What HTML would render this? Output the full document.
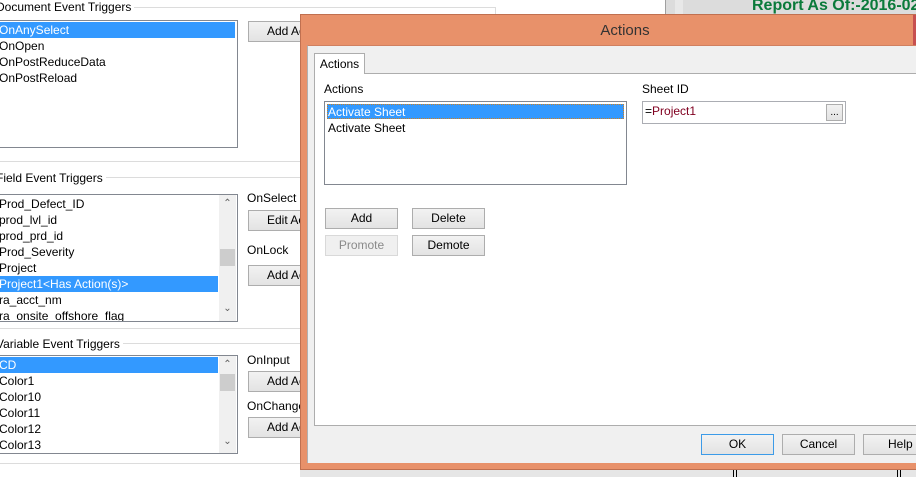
<!DOCTYPE html>
<html><head><style>
*{box-sizing:border-box;margin:0;padding:0}
body{width:916px;height:477px;overflow:hidden;background:#fff;font-family:"Liberation Sans",sans-serif;font-size:12px;color:#000;position:relative}
.a{position:absolute}
.lb{position:absolute;background:#fff;border:1px solid #828790}
.it{position:absolute;left:0;height:16px;line-height:16px;white-space:nowrap}
.sel{background:#3399ff;color:#fff}
.btn{position:absolute;background:linear-gradient(#f2f2f2,#e3e3e3);border:1px solid #adadad;text-align:center;line-height:19px;white-space:nowrap;overflow:hidden}
.grp{position:absolute;border-top:1px solid #dcdcdc}
.lab{position:absolute;background:#fff;padding-right:3px;white-space:nowrap}
.sb{position:absolute;background:#f0f0f0;width:17px}
.th{position:absolute;left:1px;width:15px;background:#cdcdcd}
.ar{position:absolute;left:0;width:17px;text-align:center;font-size:10px;color:#606060}
</style></head><body>
<div class="a" style="left:665px;top:0;width:251px;height:14px;background:#dcdcdc"></div>
<div class="a" style="left:665px;top:0;width:1px;height:14px;background:#a0a0a0"></div>
<div class="a" style="left:675px;top:0;width:8px;height:14px;background:#e8e8e8"></div>
<div class="a" style="left:752px;top:-3px;font-weight:bold;font-size:16px;color:#0a7a3a;white-space:nowrap">Report As Of:-2016-02</div>
<div class="a" style="left:300px;top:470px;width:616px;height:7px;background:#e6e6e6"></div>
<div class="a" style="left:733px;top:470px;width:1px;height:7px;background:#000"></div>
<div class="a" style="left:736px;top:470px;width:1px;height:7px;background:#000"></div>
<div class="a" style="left:897px;top:470px;width:1px;height:7px;background:#000"></div>
<div class="a" style="left:900px;top:470px;width:1px;height:7px;background:#000"></div>

<div class="grp" style="left:0;top:7px;width:496px;height:10px;border-right:1px solid #dcdcdc"></div>
<div class="lab" style="left:-4px;top:0px">Document Event Triggers</div>
<div class="lb" style="left:-2px;top:20px;width:240px;height:128px">
 <div class="it sel" style="top:1px;width:236px">OnAnySelect</div>
 <div class="it" style="top:17px">OnOpen</div>
 <div class="it" style="top:33px">OnPostReduceData</div>
 <div class="it" style="top:49px">OnPostReload</div>
</div>
<div class="btn" style="left:248px;top:21px;width:60px;height:21px;padding-left:18px;text-align:left">Add Ac</div>
<div class="a" style="left:0;top:161px;width:300px;height:1px;background:#dcdcdc"></div>
<div class="grp" style="left:0;top:177px;width:300px"></div>
<div class="lab" style="left:-4px;top:171px">Field Event Triggers</div>
<div class="lb" style="left:-2px;top:194px;width:240px;height:128px;overflow:hidden">
 <div class="it" style="top:1px">Prod_Defect_ID</div>
 <div class="it" style="top:17px">prod_lvl_id</div>
 <div class="it" style="top:33px">prod_prd_id</div>
 <div class="it" style="top:49px">Prod_Severity</div>
 <div class="it" style="top:65px">Project</div>
 <div class="it sel" style="top:81px;width:219px">Project1&lt;Has Action(s)&gt;</div>
 <div class="it" style="top:97px">ra_acct_nm</div>
 <div class="it" style="top:113px">ra_onsite_offshore_flag</div>
 <div class="sb" style="left:220px;top:0;height:126px"><div class="ar" style="top:3px">&#8963;</div><div class="th" style="top:54px;height:17px"></div><div class="ar" style="top:108px">&#8964;</div></div>
</div>
<div class="a" style="left:247px;top:191px">OnSelect</div>
<div class="btn" style="left:248px;top:210px;width:60px;height:21px;padding-left:18px;text-align:left">Edit Ac</div>
<div class="a" style="left:247px;top:243px">OnLock</div>
<div class="btn" style="left:248px;top:265px;width:60px;height:21px;padding-left:18px;text-align:left">Add Ac</div>
<div class="a" style="left:0;top:328px;width:300px;height:1px;background:#dcdcdc"></div>
<div class="grp" style="left:0;top:343px;width:300px"></div>
<div class="lab" style="left:-4px;top:337px">Variable Event Triggers</div>
<div class="lb" style="left:-2px;top:355px;width:240px;height:99px;overflow:hidden">
 <div class="it sel" style="top:1px;width:219px">CD</div>
 <div class="it" style="top:17px">Color1</div>
 <div class="it" style="top:33px">Color10</div>
 <div class="it" style="top:49px">Color11</div>
 <div class="it" style="top:65px">Color12</div>
 <div class="it" style="top:81px">Color13</div>
 <div class="sb" style="left:220px;top:0;height:97px"><div class="ar" style="top:3px">&#8963;</div><div class="th" style="top:18px;height:17px"></div><div class="ar" style="top:80px">&#8964;</div></div>
</div>
<div class="a" style="left:247px;top:353px">OnInput</div>
<div class="btn" style="left:248px;top:371px;width:60px;height:21px;padding-left:18px;text-align:left">Add Ac</div>
<div class="a" style="left:247px;top:399px">OnChange</div>
<div class="btn" style="left:248px;top:417px;width:60px;height:21px;padding-left:18px;text-align:left">Add Ac</div>
<div class="a" style="left:0;top:463px;width:300px;height:1px;background:#dcdcdc"></div>

<div class="a" style="left:300px;top:14px;width:620px;height:456px;background:#e8916a;border:1px solid #c07050"></div>
<div class="a" style="left:913px;top:15px;width:3px;height:30px;background:#c75050"></div>
<div class="a" style="left:300px;top:22px;width:650px;text-align:center;font-size:15px;color:#333">Actions</div>
<div class="a" style="left:307px;top:45px;width:609px;height:418px;background:#f0f0f0;border-left:1px solid #b0b0b0;border-top:1px solid #d08060"></div>
<div class="a" style="left:314px;top:73px;width:602px;height:353px;background:#fff;border-top:1px solid #adadad;border-left:1px solid #adadad;border-bottom:1px solid #adadad"></div>
<div class="a" style="left:314px;top:53px;width:51px;height:21px;background:#fff;border:1px solid #adadad;border-bottom:none;text-align:center;line-height:20px">Actions</div>
<div class="a" style="left:324px;top:82px">Actions</div>
<div class="lb" style="left:324px;top:101px;width:303px;height:84px">
 <div class="it sel" style="top:2px;left:2px;width:297px;height:15px;line-height:14px;border:1px dotted #d08020">Activate Sheet</div>
 <div class="it" style="top:18px;left:3px">Activate Sheet</div>
</div>
<div class="a" style="left:642px;top:82px">Sheet ID</div>
<div class="a" style="left:642px;top:101px;width:204px;height:23px;border:1px solid #abadb3;background:#fff"></div>
<div class="a" style="left:645px;top:104px"><span>=</span><span style="color:#800020">Project1</span></div>
<div class="btn" style="left:826px;top:104px;width:17px;height:17px;line-height:16px;font-size:10px">...</div>
<div class="btn" style="left:325px;top:208px;width:73px;height:21px">Add</div>
<div class="btn" style="left:412px;top:208px;width:73px;height:21px">Delete</div>
<div class="btn" style="left:325px;top:235px;width:73px;height:21px;background:#f0f0f0;border-color:#d9d9d9;color:#8a8a8a">Promote</div>
<div class="btn" style="left:412px;top:235px;width:73px;height:21px">Demote</div>
<div class="btn" style="left:701px;top:434px;width:73px;height:21px;border-color:#3c9be8">OK</div>
<div class="btn" style="left:782px;top:434px;width:73px;height:21px">Cancel</div>
<div class="btn" style="left:863px;top:434px;width:73px;height:21px;text-align:left;padding-left:24px">Help</div>
</body></html>
